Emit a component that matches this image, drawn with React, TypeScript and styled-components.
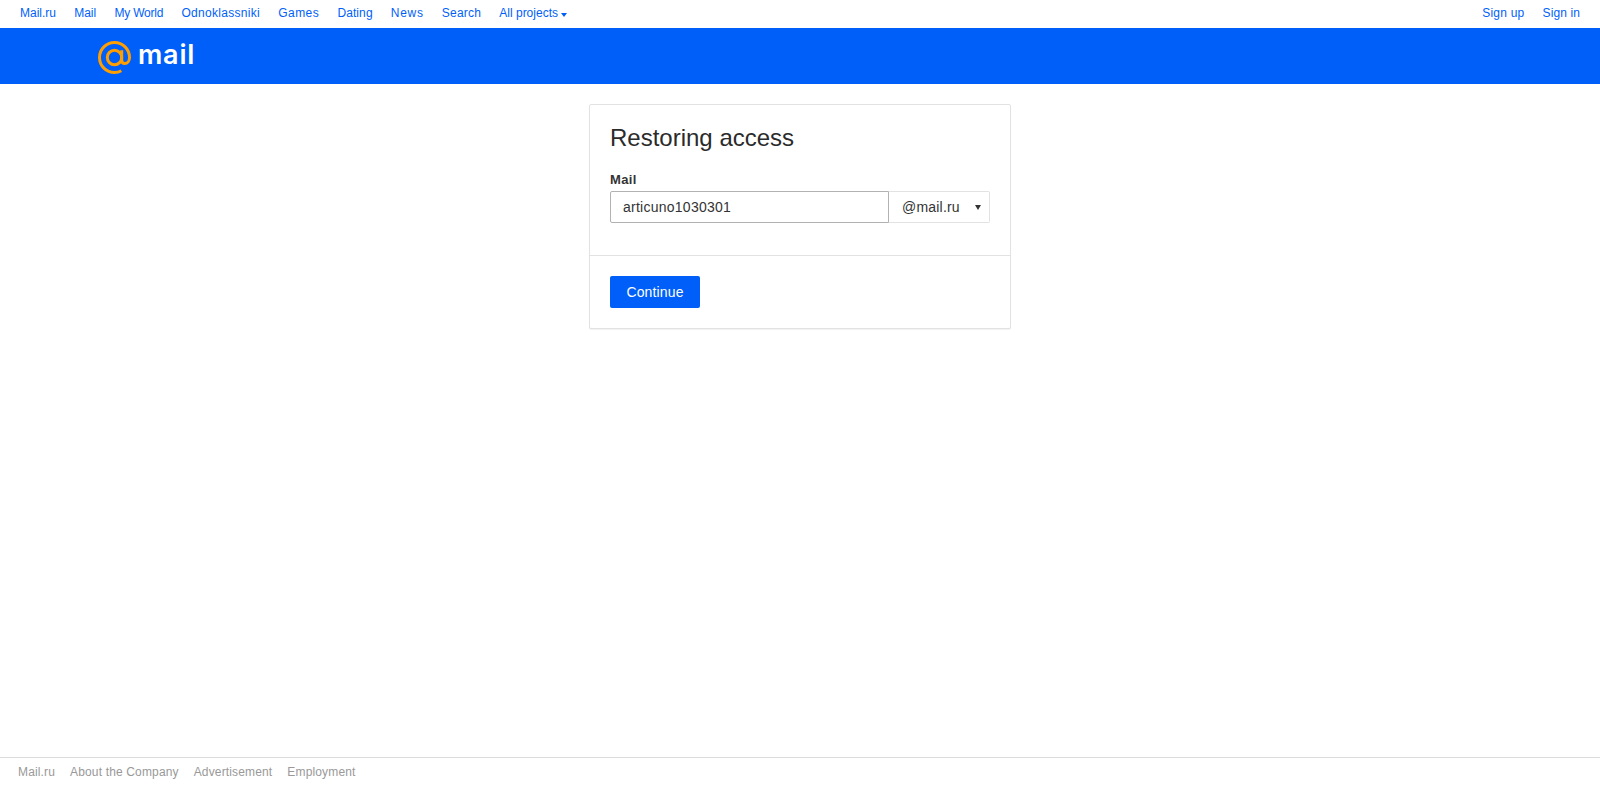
import React from 'react';
import styled, {createGlobalStyle} from 'styled-components';

const GlobalStyle = createGlobalStyle`
    html, body {
        margin: 0;
        padding: 0;
        background: #fff;
        font-family: "Liberation Sans", Arial, sans-serif;
    }
`

const Page = styled.div`
    display: flex;
    flex-direction: column;
    height: 100vh;
    box-sizing: border-box;
`

const TopBar = styled.div`
    display: flex;
    justify-content: space-between;
    align-items: center;
    height: 28px;
    padding: 0 20px 2px;
    box-sizing: border-box;
`

const TopLinks = styled.nav`
    display: flex;
    align-items: center;
    gap: 18.2px;
`

const TopLink = styled.a<{tracking?: number}>`
    font-size: 12px;
    letter-spacing: ${props => props.tracking ?? 0}px;
    color: #005ff9;
    text-decoration: none;
    display: flex;
    align-items: center;
`

const Caret = styled.span<{color: string; width: number; height: number}>`
    display: inline-block;
    width: 0;
    height: 0;
    border-left: ${props => props.width / 2}px solid transparent;
    border-right: ${props => props.width / 2}px solid transparent;
    border-top: ${props => props.height}px solid ${props => props.color};
`

const CaretSlot = styled.span`
    display: flex;
    margin: 3px 0 0 3px;
`

const Header = styled.header`
    display: flex;
    align-items: center;
    height: 56px;
    padding-left: 98px;
    background: #005ff9;
`

const Logo = styled.div`
    display: flex;
    align-items: center;
    gap: 7px;
    padding-top: 3px;
`

const LogoWord = styled.span`
    font-family: Inter, "Noto Sans", sans-serif;
    font-size: 27px;
    line-height: 30px;
    font-weight: 600;
    letter-spacing: 0.8px;
    color: #fff;
    margin-top: -5px;
`

const Main = styled.main`
    flex: 1;
    display: flex;
    justify-content: center;
    align-items: flex-start;
    padding-top: 20px;
`

const Card = styled.section`
    width: 422px;
    box-sizing: border-box;
    border: 1px solid #e2e2e2;
    border-radius: 2px;
    box-shadow: 0 1px 1px rgba(0, 0, 0, 0.06);
    background: #fff;
`

const CardBody = styled.div`
    padding: 20px 20px 32px;
    border-bottom: 1px solid #e2e2e2;
`

const CardFooter = styled.div`
    padding: 20px;
`

const Title = styled.h1`
    margin: 0 0 20px;
    font-size: 24px;
    line-height: 26px;
    font-weight: 400;
    color: #2b2b2b;
`

const Label = styled.label`
    display: block;
    margin-bottom: 2px;
    font-size: 13px;
    line-height: 18px;
    font-weight: 700;
    letter-spacing: 0.35px;
    color: #333;
`

const Field = styled.div`
    display: flex;
    height: 32px;
`

const Input = styled.input`
    width: 279px;
    box-sizing: border-box;
    padding: 0 12px;
    border: 1px solid #b2b2b2;
    border-radius: 2px 0 0 2px;
    outline: none;
    font-family: inherit;
    font-size: 14px;
    letter-spacing: 0.25px;
    color: #333;
`

const DomainSelect = styled.div`
    flex: 1;
    display: flex;
    align-items: center;
    justify-content: space-between;
    padding: 0 8px 0 13px;
    border: 1px solid #e2e2e2;
    border-left: none;
    border-radius: 0 2px 2px 0;
    font-size: 14px;
    letter-spacing: 0.2px;
    color: #333;
`

const ContinueButton = styled.button`
    display: block;
    width: 90px;
    height: 32px;
    padding: 0;
    border: none;
    border-radius: 2px;
    background: #005ff9;
    font-family: inherit;
    font-size: 14px;
    letter-spacing: 0.15px;
    color: #fff;
`

const Footer = styled.footer`
    display: flex;
    gap: 15px;
    height: 29px;
    box-sizing: border-box;
    padding: 7px 18px 0;
    border-top: 1px solid #dcdcdc;
`

const FooterLink = styled.a`
    font-size: 12px;
    line-height: 14px;
    letter-spacing: 0.15px;
    color: #999;
    text-decoration: none;
`

const projects = [
    {name: 'Mail.ru', tracking: 0},
    {name: 'Mail', tracking: 0},
    {name: 'My World', tracking: -0.2},
    {name: 'Odnoklassniki', tracking: 0.3},
    {name: 'Games', tracking: 0.45},
    {name: 'Dating', tracking: 0.1},
    {name: 'News', tracking: 0.7},
    {name: 'Search', tracking: 0.2},
];
const footerLinks = ['Mail.ru', 'About the Company', 'Advertisement', 'Employment'];

const App = () => {
    return (
        <Page>
            <GlobalStyle/>
            <TopBar>
                <TopLinks>
                    {projects.map(item => <TopLink key={item.name} href="#" tracking={item.tracking}>{item.name}</TopLink>)}
                    <TopLink href="#">
                        All projects
                        <CaretSlot><Caret color="#005ff9" width={7} height={4}/></CaretSlot>
                    </TopLink>
                </TopLinks>
                <TopLinks>
                    <TopLink href="#" tracking={0.2}>Sign up</TopLink>
                    <TopLink href="#" tracking={0.1}>Sign in</TopLink>
                </TopLinks>
            </TopBar>
            <Header>
                <Logo>
                    <svg width="33" height="33" viewBox="0 0 33 33" fill="none" stroke="#ff9e00" strokeWidth="3">
                        <circle cx="16.5" cy="16.5" r="7.2"/>
                        <path d="M23.7 9.300v9.700c0 2.300 1.300 3.600 3 3.600 2.700 0 4.800-2.600 4.800-6.100C31.500 8.200 24.800 1.500 16.500 1.500S1.500 8.200 1.500 16.500s6.700 15 15 15c2.600 0 4.800-.6 6.800-1.800"/>
                    </svg>
                    <LogoWord>mail</LogoWord>
                </Logo>
            </Header>
            <Main>
                <Card>
                    <CardBody>
                        <Title>Restoring access</Title>
                        <Label>Mail</Label>
                        <Field>
                            <Input defaultValue="articuno1030301"/>
                            <DomainSelect>
                                @mail.ru
                                <Caret color="#333" width={7} height={5}/>
                            </DomainSelect>
                        </Field>
                    </CardBody>
                    <CardFooter>
                        <ContinueButton>Continue</ContinueButton>
                    </CardFooter>
                </Card>
            </Main>
            <Footer>
                {footerLinks.map(item => <FooterLink key={item} href="#">{item}</FooterLink>)}
            </Footer>
        </Page>
    );
};

export default App;
